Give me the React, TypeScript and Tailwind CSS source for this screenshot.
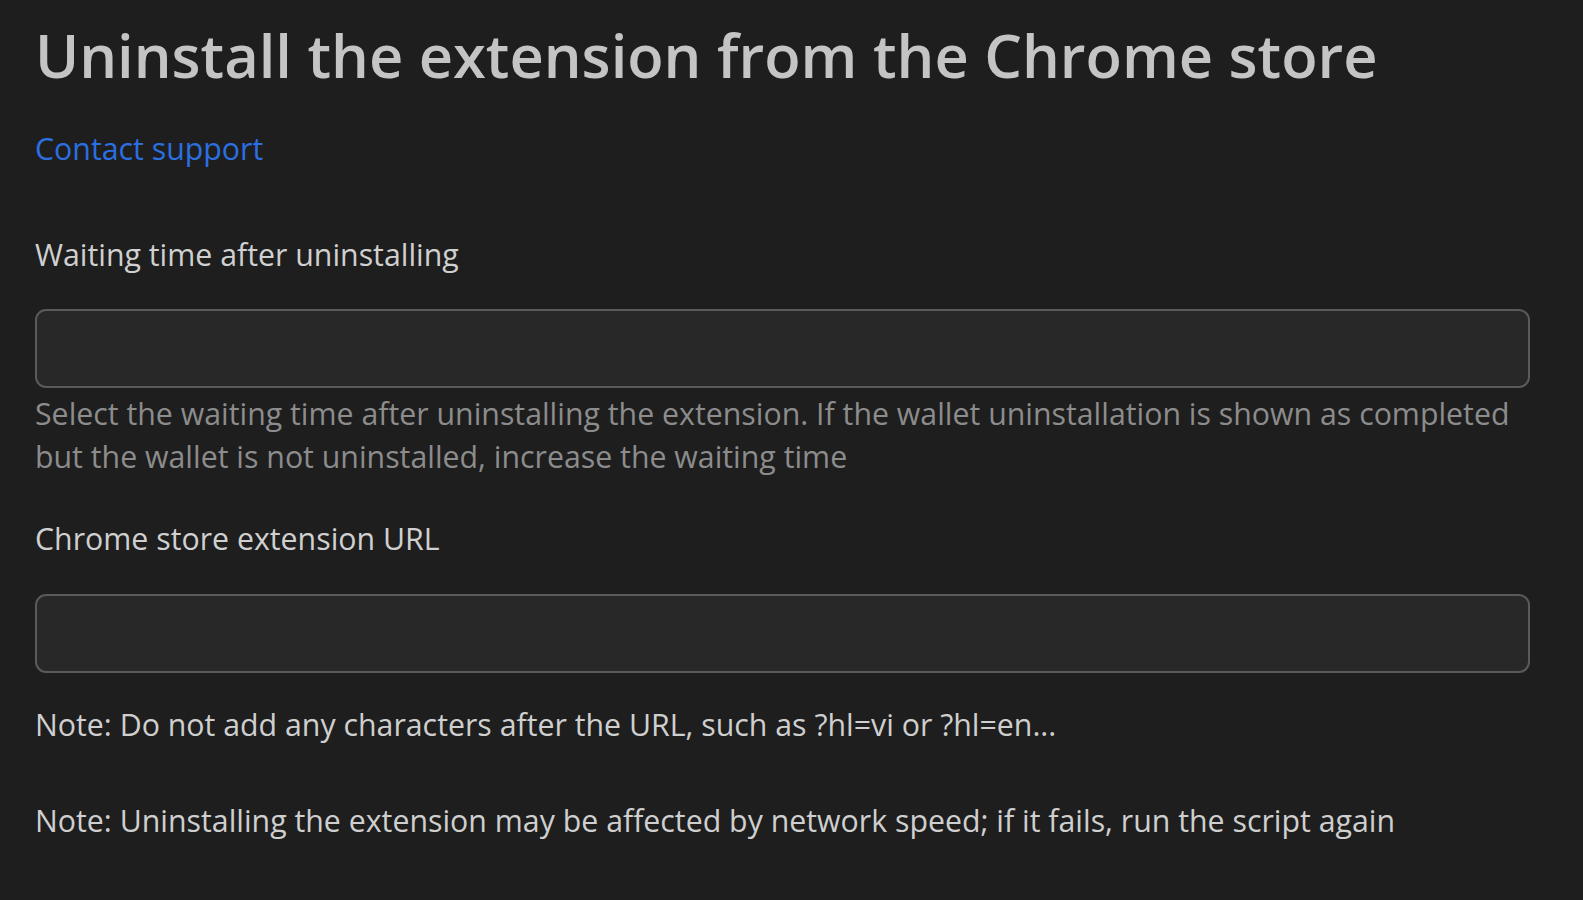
import React from "react";

const font = { fontFamily: '"Open Sans", "Noto Sans", sans-serif' };

const Field: React.FC<{ label: string; mt: string; gap: string }> = ({ label, mt, gap }) => (
  <>
    <div className={`${mt} text-[30.3px] leading-[43px] text-[#d0d0d0]`}>{label}</div>
    <input
      type="text"
      className={`${gap} block h-[79px] w-full rounded-[11px] border-2 border-[#5a5a5a] bg-[#282828] px-4 text-[30px] text-[#d0d0d0] outline-none`}
    />
  </>
);

const App: React.FC = () => {
  return (
    <div className="min-h-screen bg-[#1e1e1e] pl-[35px] pr-[53px] pt-[15px]" style={font}>
      <h1 className="text-[59.6px] font-semibold leading-[80px] text-[#c4c4c4]">
        Uninstall the extension from the Chrome store
      </h1>
      <div className="mt-[32px] text-[30.3px] leading-[43px]">
        <a href="#" className="text-[#2b6fe0]">
          Contact support
        </a>
      </div>

      <Field label="Waiting time after uninstalling" mt="mt-[63px]" gap="mt-[33px]" />
      <p className="mt-[4px] text-[30.3px] leading-[43px] text-[#8c8c8c]">
        Select the waiting time after uninstalling the extension. If the wallet uninstallation is shown as completed
        but the wallet is not uninstalled, increase the waiting time
      </p>

      <Field label="Chrome store extension URL" mt="mt-[39px]" gap="mt-[34px]" />

      <p className="mt-[30px] text-[30.3px] leading-[43px] text-[#cfcfcf]">
        Note: Do not add any characters after the URL, such as ?hl=vi or ?hl=en...
      </p>
      <p className="mt-[53px] text-[30.3px] leading-[43px] text-[#cfcfcf]">
        Note: Uninstalling the extension may be affected by network speed; if it fails, run the script again
      </p>
    </div>
  );
};

export default App;
